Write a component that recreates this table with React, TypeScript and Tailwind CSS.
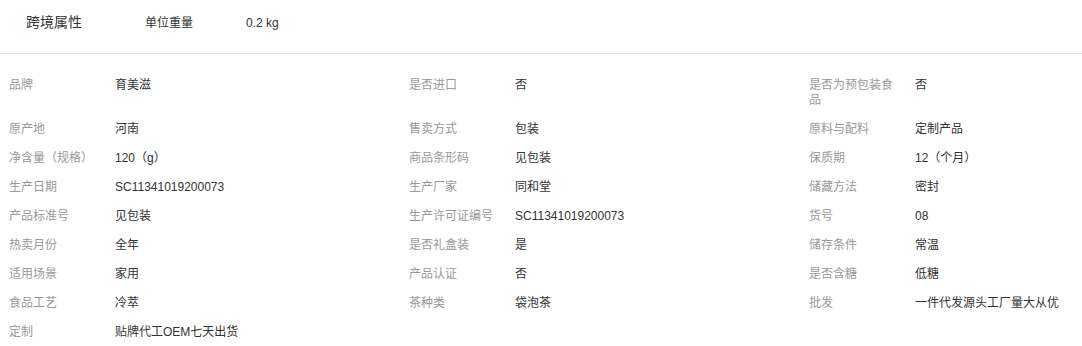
const attrs: [string, string][] = [
    ["品牌", "育美滋"],
    ["是否进口", "否"],
    ["是否为预包装食品", "否"],
    ["原产地", "河南"],
    ["售卖方式", "包装"],
    ["原料与配料", "定制产品"],
    ["净含量（规格）", "120（g）"],
    ["商品条形码", "见包装"],
    ["保质期", "12（个月）"],
    ["生产日期", "SC11341019200073"],
    ["生产厂家", "同和堂"],
    ["储藏方法", "密封"],
    ["产品标准号", "见包装"],
    ["生产许可证编号", "SC11341019200073"],
    ["货号", "08"],
    ["热卖月份", "全年"],
    ["是否礼盒装", "是"],
    ["储存条件", "常温"],
    ["适用场景", "家用"],
    ["产品认证", "否"],
    ["是否含糖", "低糖"],
    ["食品工艺", "冷萃"],
    ["茶种类", "袋泡茶"],
    ["批发", "一件代发源头工厂量大从优"],
    ["定制", "贴牌代工OEM七天出货"],
];

const App = () => {
    return (
        <div className="w-[1082px] bg-white font-['Liberation_Sans','Noto_Sans_CJK_SC',sans-serif] text-[#333]">
            {/* cross-border header */}
            <div className="flex items-center h-[54px] pb-[8px] pl-[26px] border-b border-[#e5e5e5]">
                <span className="w-[119px] text-[14px]">跨境属性</span>
                <span className="w-[101px] text-[12px]">单位重量</span>
                <span className="text-[12px]">0.2 kg</span>
            </div>
            <div className="grid grid-cols-[400px_400px_1fr] pt-[17px] text-[12px] leading-[15px]">
                {attrs.map(([label, value]) => (
                    <div key={label} className="flex py-[7px] pl-[9px]">
                        <div className="w-[106px] shrink-0 pr-[14px] text-[#999]">{label}</div>
                        <div className="text-[#333]">{value}</div>
                    </div>
                ))}
            </div>
        </div>
    );
};

export default App;
